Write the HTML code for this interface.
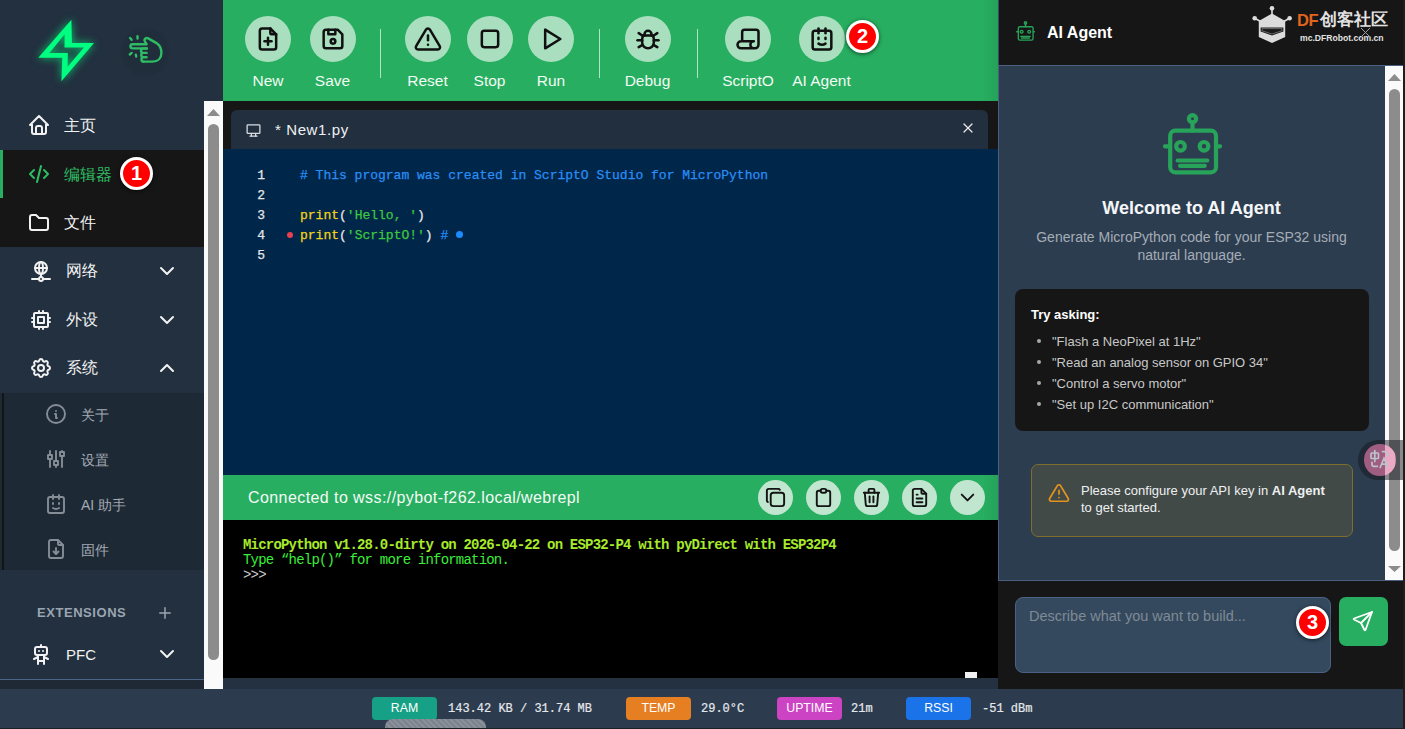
<!DOCTYPE html>
<html><head><meta charset="utf-8">
<style>
*{box-sizing:border-box;margin:0;padding:0}
html,body{width:1405px;height:729px;overflow:hidden;background:#2c3b4e;font-family:"Liberation Sans",sans-serif;position:relative}
.a{position:absolute}
svg.i{position:absolute;fill:none;stroke:currentColor;stroke-width:2;stroke-linecap:round;stroke-linejoin:round}
/* sidebar */
#sb{left:0;top:0;width:223px;height:689px;background:#22303f;overflow:hidden}
.it{position:absolute;left:0;width:204px;color:#f2f2f2;font-size:16px}
.it .t{position:absolute;left:64px;top:0;line-height:20px}
#status{left:0;top:689px;width:1405px;height:40px;background:#2c3b4e}
/* toolbar */
#tb{left:223px;top:0;width:775px;height:101px;background:#27ae60}
.btn{position:absolute;top:16px;width:46px;height:46px;border-radius:50%;background:#a9dfbf;color:#111}
.lbl{position:absolute;top:72px;color:#f2fbf4;font-size:15.5px;line-height:18px;text-align:center;width:100px}
.sep{position:absolute;top:29px;width:1px;height:49px;background:rgba(255,255,255,.65)}
.badge{position:absolute;width:33px;height:33px;border-radius:50%;background:#ff0000;border:3.7px solid #fff;box-shadow:0 1px 4px rgba(0,0,0,.6);color:#fff;font-weight:bold;font-size:20px;line-height:27.4px;text-align:center}
.code{position:absolute;left:223px;-webkit-text-stroke:0.25px currentColor;font-family:"Liberation Mono",monospace;font-size:13px;line-height:20px;white-space:pre}
.tbtn{position:absolute;top:480px;width:35px;height:35px;border-radius:50%;background:#c0e6cf;color:#141414}
.sbadge{position:absolute;top:697px;width:65px;height:23px;border-radius:4px;color:#fff;font-size:12.3px;line-height:23px;text-align:center}
.sval{position:absolute;top:701px;font-family:"Liberation Mono",monospace;font-size:12px;-webkit-text-stroke:0.2px currentColor;line-height:16px;color:#e4e8ec;white-space:pre}
.term{position:absolute;left:243px;font-family:"Liberation Mono",monospace;font-size:14px;letter-spacing:-0.8px;line-height:15px;white-space:pre}
.ask li{position:relative;list-style:none;padding-left:21px;height:21px}
.ask li:before{content:"";position:absolute;left:6px;top:8px;width:4px;height:4px;border-radius:50%;background:#a8a8a8}
</style></head><body>
<div id="status" class="a"></div>

<!-- SIDEBAR -->
<div id="sb" class="a">
  <!-- logo bolt -->
  <svg class="a" style="left:0;top:0;filter:drop-shadow(0 0 4px rgba(0,255,128,.75))" width="120" height="100" viewBox="0 0 120 100">
    <path fill="#00ff80" fill-rule="evenodd" d="M71.4 19.8 L71.9 43 L94 43 L61.4 81.2 L62.3 57.7 L38.3 57.7 Z M64.7 34.2 L64.5 47.6 L83.9 47.6 L67.6 66.8 L67.8 52.9 L49.4 52.9 Z"/>
  </svg>
  <div class="a" style="left:119px;top:26px;width:52px;height:52px;border-radius:50%;background:radial-gradient(circle,rgba(0,0,0,.07) 55%,rgba(0,0,0,0) 72%)"></div>
  <!-- hand click icon -->
  <svg class="i" style="left:120px;top:25px;color:#2ebd64;stroke-width:2.4" width="50" height="40" viewBox="120 25 50 40">
    <path d="M147 48.4 H132.6 A2.1 2.1 0 0 1 132.6 44.2 H146.6 L145 41.6 A2.3 2.3 0 0 1 148.2 38.4 L157 43.4 C160.4 45.6 161.4 49 161.4 53 C161.4 58.2 158 61.6 152.5 61.6 H143.6"/>
    <path d="M146.6 48.5 H143.2 A2.2 2.2 0 0 0 143.2 52.9 H146.6 M146.6 52.9 H143.4 A2.2 2.2 0 0 0 143.4 57.3 H146.6 M146.6 57.3 H143.6 A2.15 2.15 0 0 0 143.6 61.6"/>
    <path d="M130.1 38 L131.6 39.8 M137.5 36.2 V38.6 M129.8 54.5 L131.6 52.9 M135.8 54.6 L136.2 56.6"/>
  </svg>

  <!-- 主页 -->
  <div class="it" style="top:101px;height:49px">
    <svg class="i" style="left:27px;top:12px" width="24" height="24" viewBox="0 0 24 24"><path d="M5 12l-2 0l9 -9l9 9l-2 0"/><path d="M5 12v7a2 2 0 0 0 2 2h10a2 2 0 0 0 2 -2v-7"/><path d="M9 21v-6a2 2 0 0 1 2 -2h2a2 2 0 0 1 2 2v6"/></svg>
    <div class="t" style="top:15px">主页</div>
  </div>
  <!-- 编辑器 active -->
  <div class="it" style="top:150px;height:48px;background:#161616;color:#2ebd64">
    <div class="a" style="left:0;top:0;width:3px;height:48px;background:#27ae60"></div>
    <svg class="i" style="left:27px;top:12px" width="24" height="24" viewBox="0 0 24 24"><path d="M7 8l-4 4l4 4"/><path d="M17 8l4 4l-4 4"/><path d="M14 4l-4 16"/></svg>
    <div class="t" style="top:15px;font-weight:500">编辑器</div>
  </div>
  <!-- 文件 -->
  <div class="it" style="top:198px;height:49px;background:#161616">
    <svg class="i" style="left:27px;top:13px" width="24" height="24" viewBox="0 0 24 24"><path d="M5 4h4l3 3h7a2 2 0 0 1 2 2v8a2 2 0 0 1 -2 2h-14a2 2 0 0 1 -2 -2v-11a2 2 0 0 1 2 -2"/></svg>
    <div class="t" style="top:15px">文件</div>
  </div>
  <!-- 网络 -->
  <div class="it" style="top:247px;height:49px">
    <svg class="i" style="left:29px;top:12px" width="24" height="24" viewBox="0 0 24 24"><path d="M6 9a6 6 0 1 0 12 0a6 6 0 0 0 -12 0"/><path d="M12 3c1.333 .333 2 2.333 2 6s-.667 5.667 -2 6"/><path d="M12 3c-1.333 .333 -2 2.333 -2 6s.667 5.667 2 6"/><path d="M6 9h12"/><path d="M3 20h7"/><path d="M14 20h7"/><path d="M10 20a2 2 0 1 0 4 0a2 2 0 0 0 -4 0"/><path d="M12 15v3"/></svg>
    <div class="t" style="top:14px;left:66px">网络</div>
    <svg class="i" style="left:155px;top:12px" width="24" height="24" viewBox="0 0 24 24"><path d="M6 9l6 6l6 -6"/></svg>
  </div>
  <!-- 外设 -->
  <div class="it" style="top:296px;height:49px">
    <svg class="i" style="left:29px;top:12px" width="24" height="24" viewBox="0 0 24 24"><path d="M5 6a1 1 0 0 1 1 -1h12a1 1 0 0 1 1 1v12a1 1 0 0 1 -1 1h-12a1 1 0 0 1 -1 -1z"/><path d="M9 9h6v6h-6z"/><path d="M3 10h2"/><path d="M3 14h2"/><path d="M10 3v2"/><path d="M14 3v2"/><path d="M21 10h-2"/><path d="M21 14h-2"/><path d="M14 21v-2"/><path d="M10 21v-2"/></svg>
    <div class="t" style="top:14px;left:66px">外设</div>
    <svg class="i" style="left:155px;top:12px" width="24" height="24" viewBox="0 0 24 24"><path d="M6 9l6 6l6 -6"/></svg>
  </div>
  <!-- 系统 -->
  <div class="it" style="top:345px;height:48px">
    <svg class="i" style="left:29px;top:11px" width="24" height="24" viewBox="0 0 24 24"><path d="M10.325 4.317c.426 -1.756 2.924 -1.756 3.35 0a1.724 1.724 0 0 0 2.573 1.066c1.543 -.94 3.31 .826 2.37 2.37a1.724 1.724 0 0 0 1.065 2.572c1.756 .426 1.756 2.924 0 3.35a1.724 1.724 0 0 0 -1.066 2.573c.94 1.543 -.826 3.31 -2.37 2.37a1.724 1.724 0 0 0 -2.572 1.065c-.426 1.756 -2.924 1.756 -3.35 0a1.724 1.724 0 0 0 -2.573 -1.066c-1.543 .94 -3.31 -.826 -2.37 -2.37a1.724 1.724 0 0 0 -1.065 -2.572c-1.756 -.426 -1.756 -2.924 0 -3.35a1.724 1.724 0 0 0 1.066 -2.573c-.94 -1.543 .826 -3.31 2.37 -2.37c1 .608 2.296 .07 2.572 -1.065z"/><path d="M9 12a3 3 0 1 0 6 0a3 3 0 0 0 -6 0"/></svg>
    <div class="t" style="top:13px;left:66px">系统</div>
    <svg class="i" style="left:155px;top:11px" width="24" height="24" viewBox="0 0 24 24"><path d="M6 15l6 -6l6 6"/></svg>
  </div>
  <!-- submenu -->
  <div class="a" style="left:0;top:393px;width:204px;height:177px;background:#1e2936">
    <div class="a" style="left:2px;top:0;width:2px;height:177px;background:#141414"></div>
    <div class="it" style="top:0;height:45px;color:#a3aab3;font-size:14px">
      <svg class="i" style="left:44px;top:9px;stroke-width:1.9;color:#858d96" width="24" height="24" viewBox="0 0 24 24"><path d="M3 12a9 9 0 1 0 18 0a9 9 0 0 0 -18 0"/><path d="M12 9h.01"/><path d="M11 12h1v4h1"/></svg>
      <div class="t" style="left:81px;top:12px">关于</div>
    </div>
    <div class="it" style="top:45px;height:45px;color:#a3aab3;font-size:14px">
      <svg class="i" style="left:44px;top:9px;stroke-width:1.9;color:#858d96" width="24" height="24" viewBox="0 0 24 24"><path d="M4 8h4v4h-4z"/><path d="M6 4l0 4"/><path d="M6 12l0 8"/><path d="M10 14h4v4h-4z"/><path d="M12 4l0 10"/><path d="M12 18l0 2"/><path d="M16 5h4v4h-4z"/><path d="M18 4l0 1"/><path d="M18 9l0 11"/></svg>
      <div class="t" style="left:81px;top:12px">设置</div>
    </div>
    <div class="it" style="top:90px;height:45px;color:#a3aab3;font-size:14px">
      <svg class="i" style="left:44px;top:9px;stroke-width:1.9;color:#858d96" width="24" height="24" viewBox="0 0 24 24"><path d="M6 5h12a2 2 0 0 1 2 2v12a2 2 0 0 1 -2 2h-12a2 2 0 0 1 -2 -2v-12a2 2 0 0 1 2 -2z"/><path d="M9 16c1 .667 2 1 3 1s2 -.333 3 -1"/><path d="M9 7l0 -4"/><path d="M15 7l0 -4"/><path d="M9 12v-1"/><path d="M15 12v-1"/></svg>
      <div class="t" style="left:81px;top:12px">AI 助手</div>
    </div>
    <div class="it" style="top:135px;height:42px;color:#a3aab3;font-size:14px">
      <svg class="i" style="left:44px;top:9px;stroke-width:1.9;color:#858d96" width="24" height="24" viewBox="0 0 24 24"><path d="M14 3v4a1 1 0 0 0 1 1h4"/><path d="M17 21h-10a2 2 0 0 1 -2 -2v-14a2 2 0 0 1 2 -2h7l5 5v11a2 2 0 0 1 -2 2z"/><path d="M12 17v-6"/><path d="M9.5 14.5l2.5 2.5l2.5 -2.5"/></svg>
      <div class="t" style="left:81px;top:12px">固件</div>
    </div>
  </div>
  <!-- extensions -->
  <div class="a" style="left:37px;top:605px;font-size:13px;font-weight:bold;color:#9aa5b1;letter-spacing:0.55px;line-height:16px">EXTENSIONS</div>
  <svg class="i" style="left:156px;top:604px;color:#9aa5b1" width="18" height="18" viewBox="0 0 24 24"><path d="M12 5l0 14"/><path d="M5 12l14 0"/></svg>
  <div class="it" style="top:630px;height:48px">
    <svg class="i" style="left:29px;top:13px" width="24" height="24" viewBox="0 0 24 24"><path d="M6 6a2 2 0 0 1 2 -2h8a2 2 0 0 1 2 2v4a2 2 0 0 1 -2 2h-8a2 2 0 0 1 -2 -2l0 -4"/><path d="M12 2v2"/><path d="M9 12v9"/><path d="M15 12v9"/><path d="M5 16l4 -2"/><path d="M15 14l4 2"/><path d="M9 18h6"/><path d="M10 8v.01"/><path d="M14 8v.01"/></svg>
    <div class="t" style="left:66px;top:15px;font-size:15px">PFC</div>
    <svg class="i" style="left:155px;top:12px" width="24" height="24" viewBox="0 0 24 24"><path d="M6 9l6 6l6 -6"/></svg>
  </div>
  <div class="a" style="left:0;top:679px;width:223px;height:1px;background:#4a6585"></div>
  <div class="a" style="left:0;top:680px;width:223px;height:9px;background:#1e2935"></div>
</div>

<!-- sidebar scrollbar -->
<div class="a" style="left:204px;top:101px;width:19px;height:588px;background:#fafafa"></div>

<!-- TOOLBAR -->
<div id="tb" class="a">
  <div class="btn" style="left:22px"><svg class="i" style="left:9px;top:9px;stroke-width:2.15" width="28" height="28" viewBox="0 0 24 24"><path d="M14 3v4a1 1 0 0 0 1 1h4"/><path d="M17 21h-10a2 2 0 0 1 -2 -2v-14a2 2 0 0 1 2 -2h7l5 5v11a2 2 0 0 1 -2 2z"/><path d="M12 11l0 6"/><path d="M9 14l6 0"/></svg></div>
  <div class="lbl" style="left:-5px;width:100px">New</div>
  <div class="btn" style="left:86.5px"><svg class="i" style="left:9px;top:9px;stroke-width:2.15" width="28" height="28" viewBox="0 0 24 24"><path d="M6 4h10l4 4v10a2 2 0 0 1 -2 2h-12a2 2 0 0 1 -2 -2v-12a2 2 0 0 1 2 -2"/><path d="M10 14a2 2 0 1 0 4 0a2 2 0 1 0 -4 0"/><path d="M14 4l0 4l-6 0l0 -4"/></svg></div>
  <div class="lbl" style="left:59.5px;width:100px">Save</div>
  <div class="sep" style="left:157px"></div>
  <div class="btn" style="left:181.5px"><svg class="i" style="left:9px;top:9px;stroke-width:2.15" width="28" height="28" viewBox="0 0 24 24"><path d="M10.24 3.957l-8.422 14.06a1.989 1.989 0 0 0 1.7 2.983h16.845a1.989 1.989 0 0 0 1.7 -2.983l-8.423 -14.06a1.989 1.989 0 0 0 -3.4 0z"/><path d="M12 9v4"/><path d="M12 17h.01"/></svg></div>
  <div class="lbl" style="left:154.5px;width:100px">Reset</div>
  <div class="btn" style="left:243.5px"><svg class="i" style="left:9px;top:9px;stroke-width:2.15" width="28" height="28" viewBox="0 0 24 24"><path d="M5 7a2 2 0 0 1 2 -2h10a2 2 0 0 1 2 2v10a2 2 0 0 1 -2 2h-10a2 2 0 0 1 -2 -2z"/></svg></div>
  <div class="lbl" style="left:216.5px;width:100px">Stop</div>
  <div class="btn" style="left:305px"><svg class="i" style="left:9px;top:9px;stroke-width:2.15" width="28" height="28" viewBox="0 0 24 24"><path d="M7 4v16l13 -8z"/></svg></div>
  <div class="lbl" style="left:278px;width:100px">Run</div>
  <div class="sep" style="left:376px"></div>
  <div class="btn" style="left:401.5px"><svg class="i" style="left:9px;top:9px;stroke-width:2.15" width="28" height="28" viewBox="0 0 24 24"><path d="M9 9v-1a3 3 0 0 1 6 0v1"/><path d="M8 9h8a6 6 0 0 1 1 3v3a5 5 0 0 1 -10 0v-3a6 6 0 0 1 1 -3"/><path d="M3 13l4 0"/><path d="M17 13l4 0"/><path d="M4 19l3.35 -2"/><path d="M20 19l-3.35 -2"/><path d="M4 7l3.75 2.4"/><path d="M20 7l-3.75 2.4"/></svg></div>
  <div class="lbl" style="left:374.5px;width:100px">Debug</div>
  <div class="sep" style="left:474px"></div>
  <div class="btn" style="left:502px"><svg class="i" style="left:9px;top:9px;stroke-width:2.15" width="28" height="28" viewBox="0 0 24 24"><path d="M17 20h-11a3 3 0 0 1 0 -6h11a3 3 0 0 0 0 6h1a3 3 0 0 0 3 -3v-11a2 2 0 0 0 -2 -2h-10a2 2 0 0 0 -2 2v8"/></svg></div>
  <div class="lbl" style="left:475px;width:100px">ScriptO</div>
  <div class="btn" style="left:575.5px"><svg class="i" style="left:9px;top:9px;stroke-width:2.15" width="28" height="28" viewBox="0 0 24 24"><path d="M6 5h12a2 2 0 0 1 2 2v12a2 2 0 0 1 -2 2h-12a2 2 0 0 1 -2 -2v-12a2 2 0 0 1 2 -2z"/><path d="M9 16c1 .667 2 1 3 1s2 -.333 3 -1"/><path d="M9 7l0 -4"/><path d="M15 7l0 -4"/><path d="M9 12v-1"/><path d="M15 12v-1"/></svg></div>
  <div class="lbl" style="left:548.5px;width:100px">AI Agent</div>
</div>

<!-- TAB BAR -->
<div class="a" style="left:223px;top:101px;width:775px;height:48px;background:#161616"></div>
<div class="a" style="left:231px;top:110px;width:757px;height:39px;background:#222f3e;border-radius:6px 6px 0 0"></div>

<!-- CODE -->
<div class="a" style="left:223px;top:149px;width:775px;height:326px;background:#00264a"></div>

<!-- TERMINAL HEADER -->
<div class="a" style="left:223px;top:475px;width:775px;height:45px;background:#27ae60"></div>
<!-- TERMINAL -->
<div class="a" style="left:223px;top:520px;width:775px;height:158px;background:#000"></div>
<div class="a" style="left:223px;top:678px;width:775px;height:11px;background:#243141"></div>

<!-- RIGHT PANEL -->
<div class="a" style="left:998px;top:0;width:407px;height:689px;background:#161616"></div>
<div class="a" style="left:998px;top:65px;width:405px;height:516px;background:#2d3d50;border-top:1px solid #4a6080;border-bottom:1px solid #4a6080;border-left:1px solid #4a6080"></div>


<!-- tab content -->
<svg class="i" style="left:244.5px;top:121.5px;color:#d8dde3;stroke-width:1.8" width="17" height="17" viewBox="0 0 24 24"><path d="M3 5a1 1 0 0 1 1 -1h16a1 1 0 0 1 1 1v10a1 1 0 0 1 -1 1h-16a1 1 0 0 1 -1 -1v-10z"/><path d="M7 20h10"/><path d="M9 16v4"/><path d="M15 16v4"/></svg>
<div class="a" style="left:275px;top:120px;font-size:15px;letter-spacing:0.6px;line-height:20px;color:#eef1f4">* New1.py</div>
<svg class="i" style="left:960px;top:120px;color:#e8e8e8;stroke-width:1.8" width="16" height="16" viewBox="0 0 24 24"><path d="M18 6l-12 12"/><path d="M6 6l12 12"/></svg>

<!-- code lines -->
<div class="code" style="top:166px;left:251px;color:#e6e6e6;width:14px;text-align:right">1
2
3
4
5</div>
<div class="code" style="top:166px;left:300px"><span style="color:#2a8ef5"># This program was created in ScriptO Studio for MicroPython</span>

<span style="color:#f2d21b">print</span><span style="color:#e8e8e8">(</span><span style="color:#3ec83e">'Hello, '</span><span style="color:#e8e8e8">)</span>
<span style="color:#f2d21b">print</span><span style="color:#e8e8e8">(</span><span style="color:#3ec83e">'ScriptO!'</span><span style="color:#e8e8e8">)</span> <span style="color:#2a8ef5">#</span></div>
<div class="a" style="left:287px;top:232px;width:6px;height:6px;border-radius:50%;background:#e8414f"></div>
<div class="a" style="left:456px;top:231px;width:7px;height:7px;border-radius:50%;background:#1a8cff"></div>


<!-- terminal header content -->
<div class="a" style="left:248px;top:488px;font-size:16px;letter-spacing:0.42px;line-height:20px;color:#f4fbf6">Connected to wss://pybot-f262.local/webrepl</div>
<div class="tbtn" style="left:758px"><svg class="i" style="left:6px;top:6px;stroke-width:2" width="23" height="23" viewBox="0 0 24 24"><path d="M7 9.667a2.667 2.667 0 0 1 2.667 -2.667h8.666a2.667 2.667 0 0 1 2.667 2.667v8.666a2.667 2.667 0 0 1 -2.667 2.667h-8.666a2.667 2.667 0 0 1 -2.667 -2.667z"/><path d="M4.012 16.737a2.005 2.005 0 0 1 -1.012 -1.737v-10c0 -1.1 .9 -2 2 -2h10c.75 0 1.158 .385 1.5 1"/></svg></div>
<div class="tbtn" style="left:806px"><svg class="i" style="left:6px;top:6px;stroke-width:2" width="23" height="23" viewBox="0 0 24 24"><path d="M9 5h-2a2 2 0 0 0 -2 2v12a2 2 0 0 0 2 2h10a2 2 0 0 0 2 -2v-12a2 2 0 0 0 -2 -2h-2"/><path d="M9 5a2 2 0 0 1 2 -2h2a2 2 0 0 1 2 2a2 2 0 0 1 -2 2h-2a2 2 0 0 1 -2 -2z"/></svg></div>
<div class="tbtn" style="left:854px"><svg class="i" style="left:6px;top:6px;stroke-width:2" width="23" height="23" viewBox="0 0 24 24"><path d="M4 7l16 0"/><path d="M10 11l0 6"/><path d="M14 11l0 6"/><path d="M5 7l1 12a2 2 0 0 0 2 2h8a2 2 0 0 0 2 -2l1 -12"/><path d="M9 7v-3a1 1 0 0 1 1 -1h4a1 1 0 0 1 1 1v3"/></svg></div>
<div class="tbtn" style="left:902px"><svg class="i" style="left:6px;top:6px;stroke-width:2" width="23" height="23" viewBox="0 0 24 24"><path d="M14 3v4a1 1 0 0 0 1 1h4"/><path d="M17 21h-10a2 2 0 0 1 -2 -2v-14a2 2 0 0 1 2 -2h7l5 5v11a2 2 0 0 1 -2 2z"/><path d="M9 9l1 0"/><path d="M9 13l6 0"/><path d="M9 17l6 0"/></svg></div>
<div class="tbtn" style="left:950px"><svg class="i" style="left:6px;top:6px;stroke-width:2" width="23" height="23" viewBox="0 0 24 24"><path d="M6 9l6 6l6 -6"/></svg></div>

<!-- terminal text -->
<div class="term" style="top:537.5px;color:#a8ea2c;font-weight:bold">MicroPython v1.28.0-dirty on 2026-04-22 on ESP32-P4 with pyDirect with ESP32P4</div>
<div class="term" style="top:552.5px;color:#3aee3a">Type “help()” for more information.</div>
<div class="term" style="top:567.5px;color:#c8c8c8">&gt;&gt;&gt;</div>
<div class="a" style="left:965px;top:672px;width:12px;height:6px;background:#f0f0f0"></div>

<!-- status bar content -->
<div class="sbadge" style="left:372px;background:#16a085">RAM</div>
<div class="sval" style="left:448px">143.42 KB / 31.74 MB</div>
<div class="sbadge" style="left:626px;background:#e67e22">TEMP</div>
<div class="sval" style="left:701px">29.0°C</div>
<div class="sbadge" style="left:777px;background:#cc44c4">UPTIME</div>
<div class="sval" style="left:851px">21m</div>
<div class="sbadge" style="left:906px;background:#1a73e8">RSSI</div>
<div class="sval" style="left:982px">-51 dBm</div>
<div class="a" style="left:385px;top:719px;width:101px;height:10px;border-radius:8px 8px 0 0;background:repeating-linear-gradient(45deg,#8a9099 0 2px,#7d838c 2px 4px)"></div>


<div class="a" style="left:998px;top:0;width:1px;height:65px;background:#3a4a62"></div>
<div class="a" style="left:983px;top:0;width:15px;height:101px;background:linear-gradient(to right,rgba(0,0,0,0),rgba(0,0,0,.07))"></div>
<div class="a" style="left:983px;top:475px;width:15px;height:45px;background:linear-gradient(to right,rgba(0,0,0,0),rgba(0,0,0,.07))"></div>
<!-- right panel content -->
<svg class="a" style="left:1016px;top:21px" width="19" height="20" viewBox="1163 113 59 62"><g fill="none" stroke="#27a35a" stroke-width="4.2" stroke-linecap="round"><rect x="1170.2" y="130.7" width="45.8" height="41.6" rx="5"/><circle cx="1192.5" cy="118.8" r="3.6"/><path d="M1192.5 122.4V130.7M1165 146.3h4M1217 146.3h3M1177.6 160.5h29.7M1180 165.8h24.8"/><circle cx="1180.5" cy="146.3" r="4.3"/><circle cx="1204" cy="146.3" r="4.3"/></g></svg>
<div class="a" style="left:1047px;top:23px;font-size:16px;font-weight:bold;line-height:20px;color:#fff">AI Agent</div>

<!-- DF logo watermark -->
<svg class="a" style="left:1250px;top:4px" width="45" height="42" viewBox="0 0 45 42">
  <g fill="#dcdcdc" stroke="#dcdcdc">
    <circle cx="22" cy="4.2" r="2.3" stroke="none"/><circle cx="4.7" cy="14.2" r="2.3" stroke="none"/><circle cx="39.6" cy="14.2" r="2.3" stroke="none"/>
    <path d="M22 4v6M4.7 14.2l5.5 3M39.6 14.2l-5.5 3" stroke-width="1.6" fill="none"/>
    <path d="M22 9.5 L35.2 17 V33 L22 39 L8.8 33 V17 Z" stroke="none"/>
  </g>
  <path d="M10.6 23.5 H33.4 V27.5 L22 31.5 L10.6 27.5 Z" fill="#1a1a1a"/>
  <path d="M12 24.6 H32 V26.8 L22 30 L12 26.8 Z" fill="none" stroke="#9a9a9a" stroke-width="0.6"/>
</svg>
<div class="a" style="left:1297px;top:10px;font-size:16.5px;font-weight:bold;line-height:20px;color:#e0651e;letter-spacing:-0.3px">DF</div>
<div class="a" style="left:1320px;top:10px;font-size:17px;font-weight:bold;line-height:20px;color:#e2e2e2">创客社区</div>
<div class="a" style="left:1300px;top:33px;font-size:8.6px;font-weight:bold;line-height:10px;color:#e2e2e2">mc.DFRobot.com.cn</div>
<svg class="a" style="left:1360px;top:27px" width="11" height="11" viewBox="0 0 11 11"><path d="M1 1L10 10M10 1L1 10" stroke="#9aa0a6" stroke-width="1"/></svg>

<!-- big robot -->
<svg class="a" style="left:1163px;top:113px" width="59" height="62" viewBox="1163 113 59 62"><g fill="none" stroke="#27a35a" stroke-width="4.2" stroke-linecap="round"><rect x="1170.2" y="130.7" width="45.8" height="41.6" rx="5"/><circle cx="1192.5" cy="118.8" r="3.6"/><path d="M1192.5 122.4V130.7M1165 146.3h4M1217 146.3h3M1177.6 160.5h29.7M1180 165.8h24.8"/><circle cx="1180.5" cy="146.3" r="4.3"/><circle cx="1204" cy="146.3" r="4.3"/></g></svg>
<div class="a" style="left:999px;top:197px;width:385px;text-align:center;font-size:18px;font-weight:bold;line-height:22px;color:#f4f6f8">Welcome to AI Agent</div>
<div class="a" style="left:1025px;top:228px;width:333px;text-align:center;font-size:14px;line-height:18px;color:#a4adb6">Generate MicroPython code for your ESP32 using natural language.</div>

<!-- try asking -->
<div class="a" style="left:1015px;top:289px;width:354px;height:142px;border-radius:8px;background:#161616"></div>
<div class="a" style="left:1031px;top:306.5px;font-size:13px;font-weight:bold;line-height:16px;color:#fff">Try asking:</div>
<ul class="a ask" style="left:1031px;top:331px;font-size:13px;line-height:21px;color:#c8c8c8">
<li>"Flash a NeoPixel at 1Hz"</li>
<li>"Read an analog sensor on GPIO 34"</li>
<li>"Control a servo motor"</li>
<li>"Set up I2C communication"</li>
</ul>

<!-- warning -->
<div class="a" style="left:1031px;top:464px;width:322px;height:73px;border-radius:7px;background:#424a48;border:1px solid #7f6d2c"></div>
<svg class="i" style="left:1048px;top:482px;color:#e3921e;stroke-width:1.9" width="22" height="22" viewBox="0 0 24 24"><path d="M10.24 3.957l-8.422 14.06a1.989 1.989 0 0 0 1.7 2.983h16.845a1.989 1.989 0 0 0 1.7 -2.983l-8.423 -14.06a1.989 1.989 0 0 0 -3.4 0z"/><path d="M12 9v4"/><path d="M12 17h.01"/></svg>
<div class="a" style="left:1081px;top:482px;font-size:13px;line-height:17px;color:#eef0f0;width:260px">Please configure your API key in <b>AI Agent</b><br>to get started.</div>

<!-- right scrollbar -->
<div class="a" style="left:1385px;top:66px;width:18px;height:514px;background:#fafafa"></div>
<svg class="a" style="left:1385px;top:66px" width="18" height="514" viewBox="0 0 18 514"><path d="M3 15H16L9.5 8Z" fill="#8c8c8c"/><rect x="4" y="23" width="11" height="462" rx="5.5" fill="#8c8c8c"/><path d="M3 500H16L9.5 506Z" fill="#8c8c8c"/></svg>
<!-- left scrollbar arrow/thumb -->
<svg class="a" style="left:204px;top:101px" width="19" height="588" viewBox="0 0 19 588"><path d="M3 15H16L9.5 8Z" fill="#8c8c8c"/><rect x="4" y="23" width="11" height="536" rx="5.5" fill="#8c8c8c"/></svg>

<!-- translate float -->
<div class="a" style="left:1358px;top:440px;width:47px;height:40px;border-radius:20px 0 0 20px;background:rgba(20,24,30,.5)"></div>
<div class="a" style="left:1364px;top:444px;width:31.5px;height:31.5px;border-radius:50%;background:rgba(235,125,175,.62)"></div>
<div class="a" style="left:1364px;top:444px;width:31.5px;height:31.5px;border-radius:50%;background:#eaa9c4;clip-path:inset(0 0 0 21px)"></div>
<svg class="a" style="left:1350px;top:430px" width="55" height="60" viewBox="1350 430 55 60"><g fill="none" stroke="#bcc3cb" stroke-width="1.7" stroke-linecap="round"><rect x="1371" y="453" width="7.5" height="5.5" rx="0.8"/><path d="M1374.8 450.5V461.5M1372 462.3v2.2a1.8 1.8 0 0 0 1.8 1.8h3.6M1382.5 451.6h2a3 3 0 0 1 3 3v1.3M1380.2 467.5L1384 458.2L1387.8 467.5M1381.6 464.2h4.8"/></g></svg>
<!-- input -->
<div class="a" style="left:1015px;top:597px;width:316px;height:76px;border-radius:8px;background:#34495e;border:1px solid #4a6285"></div>
<div class="a" style="left:1029px;top:608px;font-size:14.5px;line-height:17px;color:#7f8a95">Describe what you want to build...</div>
<div class="a" style="left:1339px;top:597px;width:49px;height:49px;border-radius:7px;background:#27ae60"></div>
<svg class="i" style="left:1351px;top:609px;color:#fff;stroke-width:1.8" width="24" height="24" viewBox="0 0 24 24"><path d="M10 14l11 -11"/><path d="M21 3l-6.5 18a.55 .55 0 0 1 -1 0l-3.5 -7l-7 -3.5a.55 .55 0 0 1 0 -1l18 -6.5"/></svg>
<div class="a" style="left:1403px;top:0;width:2px;height:729px;background:#1e1e1e"></div>
<div class="a" style="left:0;top:728px;width:1405px;height:1px;background:#1a1f26"></div>

<!-- badges -->
<div class="badge" style="left:120px;top:157px">1</div>
<div class="badge" style="left:846px;top:20px">2</div>
<div class="badge" style="left:1296px;top:606px">3</div>


</body></html>
